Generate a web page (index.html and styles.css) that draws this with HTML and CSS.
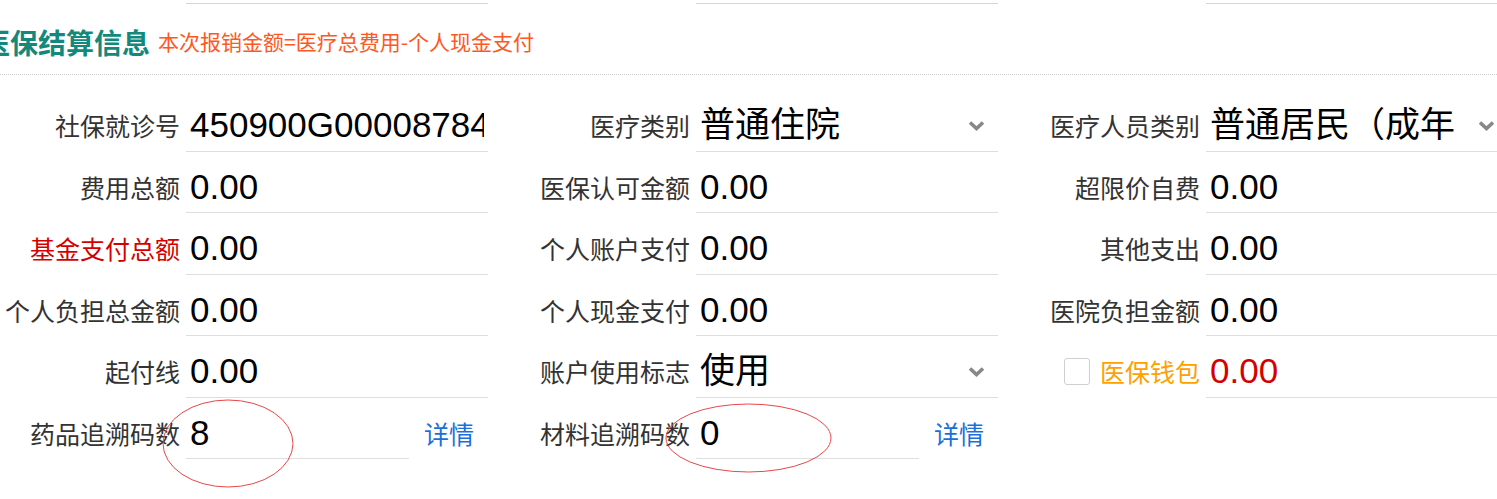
FILE: index.html
```html
<!DOCTYPE html>
<html lang="zh-CN">
<head>
  <meta charset="UTF-8">
  <title>医保结算信息</title>
  <link rel="stylesheet" href="styles.css">
</head>
<body>

  <div class="page">
    <div class="grid stubs">
      <div class="cell"><div class="stub"></div></div>
      <div class="cell"><div class="stub"></div></div>
      <div class="cell"><div class="stub"></div></div>
    </div>

    <div class="section-title">
      <h2>医保结算信息</h2>
      <span class="hint">本次报销金额=医疗总费用-个人现金支付</span>
    </div>

    <div class="grid form">
      <div class="item">
        <label>社保就诊号</label>
        <div class="field"><span class="val">450900G000087845</span></div>
      </div>
      <div class="item">
        <label>医疗类别</label>
        <div class="field select"><span class="val">普通住院</span>
          <svg class="arrow" width="17" height="11" viewBox="0 0 17 11"><path d="M2 2.5 L8.5 8.5 L15 2.5" fill="none" stroke="#888" stroke-width="3.6"/></svg>
        </div>
      </div>
      <div class="item">
        <label>医疗人员类别</label>
        <div class="field select"><span class="val">普通居民（成年人）</span>
          <svg class="arrow" width="17" height="11" viewBox="0 0 17 11"><path d="M2 2.5 L8.5 8.5 L15 2.5" fill="none" stroke="#888" stroke-width="3.6"/></svg>
        </div>
      </div>

      <div class="item">
        <label>费用总额</label>
        <div class="field"><span class="val">0.00</span></div>
      </div>
      <div class="item">
        <label>医保认可金额</label>
        <div class="field"><span class="val">0.00</span></div>
      </div>
      <div class="item">
        <label>超限价自费</label>
        <div class="field"><span class="val">0.00</span></div>
      </div>

      <div class="item">
        <label class="red">基金支付总额</label>
        <div class="field"><span class="val">0.00</span></div>
      </div>
      <div class="item">
        <label>个人账户支付</label>
        <div class="field"><span class="val">0.00</span></div>
      </div>
      <div class="item">
        <label>其他支出</label>
        <div class="field"><span class="val">0.00</span></div>
      </div>

      <div class="item">
        <label>个人负担总金额</label>
        <div class="field"><span class="val">0.00</span></div>
      </div>
      <div class="item">
        <label>个人现金支付</label>
        <div class="field"><span class="val">0.00</span></div>
      </div>
      <div class="item">
        <label>医院负担金额</label>
        <div class="field"><span class="val">0.00</span></div>
      </div>

      <div class="item">
        <label>起付线</label>
        <div class="field"><span class="val">0.00</span></div>
      </div>
      <div class="item">
        <label>账户使用标志</label>
        <div class="field select"><span class="val">使用</span>
          <svg class="arrow" width="17" height="11" viewBox="0 0 17 11"><path d="M2 2.5 L8.5 8.5 L15 2.5" fill="none" stroke="#888" stroke-width="3.6"/></svg>
        </div>
      </div>
      <div class="item">
        <label class="orange"><span class="check"></span>医保钱包</label>
        <div class="field"><span class="val red">0.00</span></div>
      </div>

      <div class="item">
        <label>药品追溯码数</label>
        <div class="field short"><span class="val">8</span></div>
        <a class="detail" href="#">详情</a>
      </div>
      <div class="item">
        <label>材料追溯码数</label>
        <div class="field short"><span class="val">0</span></div>
        <a class="detail" href="#">详情</a>
      </div>
      <div class="item"></div>
    </div>

    <svg class="marks" width="1497" height="499">
      <ellipse cx="228" cy="443.5" rx="65" ry="43.5" fill="none" stroke="#e8474a" stroke-width="1"/>
      <ellipse cx="748.5" cy="438" rx="82.5" ry="34" fill="none" stroke="#e8474a" stroke-width="1"/>
    </svg>
  </div>

</body>
</html>
```

FILE: styles.css
```css
body {
  margin: 0;
  background: #fff;
  font-family: "Microsoft YaHei", "Noto Sans CJK SC", sans-serif;
  color: #333;
  overflow: hidden;
}

.page {
  position: relative;
  width: 1497px;
  height: 499px;
}

.grid {
  display: grid;
  grid-template-columns: repeat(3, 510px);
}

.stubs {
  height: 5px;
}

.stub {
  margin-left: 186px;
  width: 302px;
  height: 4px;
  box-sizing: border-box;
  border-bottom: 1px solid #d6d6d6;
}

.section-title {
  display: flex;
  align-items: center;
  height: 70px;
  padding-top: 4px;
  box-sizing: border-box;
  border-bottom: 1px dotted #cfcfcf;
}

.section-title h2 {
  margin: 0 0 0 -18px;
  font-size: 28px;
  font-weight: bold;
  line-height: 1;
  color: #12897c;
}

.hint {
  margin-left: 8px;
  font-size: 21px;
  line-height: 1;
  color: #ff5722;
}

.form {
  margin-top: 15px;
}

.item {
  display: flex;
  height: 61.5px;
}

.item label {
  display: flex;
  align-items: center;
  justify-content: flex-end;
  width: 180px;
  margin-right: 6px;
  padding-top: 10px;
  box-sizing: border-box;
  font-size: 25px;
  line-height: 1;
  white-space: nowrap;
}

.item label.red {
  color: #d40000;
}

.item label.orange {
  color: #ffa000;
}

.check {
  width: 26px;
  height: 27px;
  margin-right: 10px;
  box-sizing: border-box;
  border: 1px solid #cfcfcf;
  border-radius: 3px;
  background: #fff;
}

.field {
  display: flex;
  align-items: center;
  width: 302px;
  padding: 10px 4px 0 4px;
  box-sizing: border-box;
  border-bottom: 1px solid #dedede;
}

.field.select {
  position: relative;
  padding-right: 52px;
}

.field.short {
  width: 223px;
}

.val {
  flex: 1;
  min-width: 0;
  overflow: hidden;
  font-family: "Liberation Sans", "Noto Sans CJK SC", sans-serif;
  font-size: 35px;
  line-height: 1.1;
  color: #000;
  white-space: nowrap;
}

.val.red {
  color: #d40000;
}

.arrow {
  position: absolute;
  right: 13px;
  top: 30px;
}

.detail {
  display: flex;
  align-items: center;
  margin-left: 15px;
  padding-top: 10px;
  font-size: 25px;
  line-height: 1;
  color: #1a6fdc;
  text-decoration: none;
}

.marks {
  position: absolute;
  left: 0;
  top: 0;
  pointer-events: none;
}
```
